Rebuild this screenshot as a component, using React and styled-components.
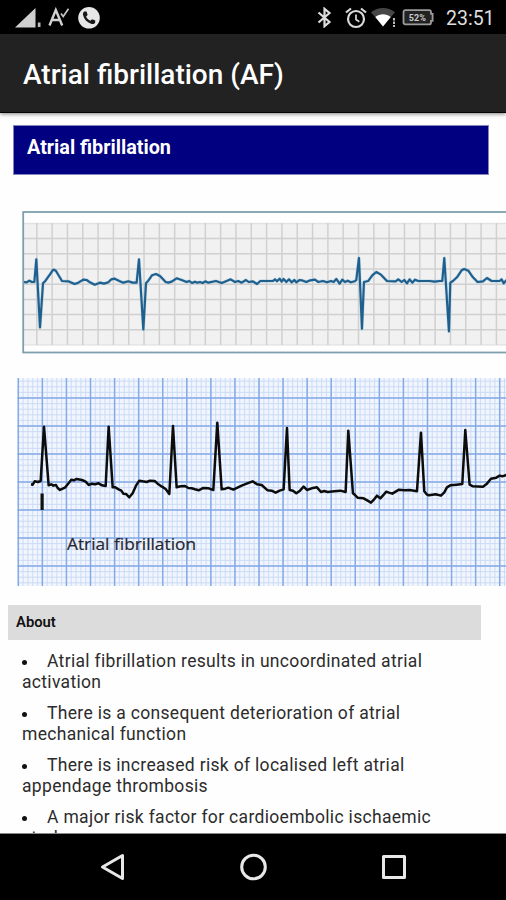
import React from "react";
import styled, { createGlobalStyle } from "styled-components";

const GlobalStyle = createGlobalStyle`
  body {
    margin: 0;
    background: #fff;
    font-family: Roboto, sans-serif;
  }
`;

const Screen = styled.div`
  display: flex;
  flex-direction: column;
  width: 506px;
  height: 900px;
  overflow: hidden;
  background: #fefefe;
`;

const StatusBar = styled.div`
  display: flex;
  justify-content: space-between;
  align-items: center;
  flex: none;
  box-sizing: border-box;
  height: 34px;
  padding: 1px 11px 0 15px;
  background: #000;
`;

const StatusGroup = styled.div`
  display: flex;
  align-items: center;
`;

const StatusIcon = styled.svg`
  display: block;
  flex: none;
  margin-left: ${(p) => p.$gap || 0}px;
`;

const Clock = styled.span`
  width: 49px;
  margin-left: 12px;
  padding-top: 2px;
  color: #dedede;
  font-size: 19.5px;
  line-height: 32px;
  white-space: nowrap;
`;

const AppBar = styled.header`
  display: flex;
  align-items: center;
  flex: none;
  position: relative;
  z-index: 1;
  box-sizing: border-box;
  height: 79px;
  padding: 3px 0 0 23px;
  background: #222;
  border-bottom: 1px solid #050505;
  box-shadow: 0 1px 4px rgba(0, 0, 0, 0.5);
`;

const Title = styled.h1`
  margin: 0;
  color: #fff;
  font-size: 28px;
  font-weight: 500;
  white-space: nowrap;
`;

const Content = styled.main`
  display: flex;
  flex-direction: column;
  flex: 1;
  min-height: 0;
  overflow: hidden;
  box-sizing: border-box;
  padding-top: 12px;
  border-bottom: 1px solid #888;
`;

const Banner = styled.h2`
  flex: none;
  box-sizing: border-box;
  width: 476px;
  height: 50px;
  margin: 0 0 0 13px;
  padding-left: 13px;
  background: #000080;
  border: 1px solid #8585bb;
  color: #fff;
  font-size: 19.8px;
  line-height: 44px;
  font-weight: 700;
`;

const Strip = styled.svg`
  display: block;
  flex: none;
  margin: ${(p) => p.$top}px 0 0 ${(p) => p.$left}px;
`;

const SectionTitle = styled.h3`
  flex: none;
  width: 465px;
  height: 35px;
  margin: 18px 0 0 8px;
  padding-left: 8px;
  background: #dcdcdc;
  color: #111;
  font-size: 14.8px;
  line-height: 35px;
  font-weight: 600;
`;

const List = styled.ul`
  list-style: none;
  margin: 11px 0 0 22px;
  padding: 0;
`;

const ListItem = styled.li`
  margin-bottom: 10px;
  color: #2c2c2c;
  font-size: 17.5px;
  line-height: 21px;
  letter-spacing: 0.32px;
  white-space: nowrap;
`;

const Bullet = styled.span`
  display: inline-block;
  width: 5px;
  height: 5px;
  margin-right: 20px;
  border-radius: 50%;
  background: #111;
  vertical-align: 2px;
`;

const NavBar = styled.nav`
  display: flex;
  align-items: center;
  justify-content: center;
  gap: 112px;
  flex: none;
  height: 66px;
  background: #000;
`;

const NavIcon = styled.svg`
  display: block;
  fill: none;
  stroke: #e8e8e8;
  stroke-width: 3;
  stroke-linejoin: round;
`;

// n evenly spaced positions
const steps = (start, gap, n) =>
  Array.from({ length: n }, (_, i) => start + i * gap);

const BLUE_TRACE =
  "72,246 80,247 88,242 96,246 103,246 109,178 120,382 129,250 136,243 150,223 158,211 162,209 168,213 186,243 205,244 215,248 224,252 235,248 250,239 260,240 270,247 284,254 300,248 312,251 325,247 334,238 344,236 358,243 370,248 385,244 398,248 410,248 417,178 430,388 438,250 445,242 456,226 468,222 480,228 497,246 505,248 515,245 530,235 545,240 560,246 568,243 576,249 585,245 592,248 600,246 608,249 616,244 625,248 648,243 665,249 680,243 692,238 705,246 715,243 725,248 738,240 746,246 759,244 771,252 781,243 819,243 825,238 831,244 839,236 845,245 851,237 859,246 867,238 875,247 883,240 889,247 899,240 909,242 919,246 931,241 945,239 955,246 969,243 981,247 993,243 1001,246 1009,237 1019,251 1027,239 1035,246 1043,242 1053,247 1064,244 1069,240 1077,174 1086,386 1092,246 1105,243 1117,226 1129,216 1143,224 1161,243 1187,244 1195,238 1205,246 1213,240 1221,250 1229,238 1237,248 1245,239 1255,243 1289,243 1304,245 1319,243 1327,243 1333,174 1347,394 1351,248 1359,243 1371,232 1385,211 1393,207 1405,212 1419,232 1433,246 1449,244 1461,234 1475,243 1499,243 1505,238 1511,250 1520,240";

const BLACK_TRACE =
  "93,343 98,344 104,334 114,336 122,333 132,170 146,346 154,343 160,347 168,345 173,354 180,360 196,352 214,329 222,331 230,327 246,330 257,335 266,345 275,341 285,343 296,340 306,346 317,348 326,170 338,352 346,352 356,358 364,362 370,371 378,372 388,382 398,370 408,347 418,332 428,334 440,336 450,332 464,333 473,341 486,350 497,357 508,372 519,168 530,352 542,349 555,348 565,354 575,355 585,358 596,361 610,354 626,355 640,360 652,158 665,358 676,356 685,353 700,359 725,347 740,341 758,334 771,343 785,345 803,361 815,362 827,368 839,362 851,358 861,174 869,360 879,362 889,370 900,362 911,350 921,360 935,355 951,352 963,366 973,363 983,366 1003,364 1021,362 1037,366 1045,182 1059,370 1066,376 1073,383 1091,385 1103,392 1113,398 1121,390 1131,377 1141,385 1152,373 1159,365 1167,368 1177,371 1197,359 1213,361 1229,360 1251,364 1263,188 1273,364 1280,373 1287,376 1307,373 1323,377 1333,367 1341,352 1351,346 1370,344 1387,342 1396,180 1409,344 1419,349 1449,350 1461,341 1473,326 1489,323 1499,317 1507,319 1520,315";

const BlueStrip = () => (
  <Strip $top={36} $left={22} width="484" height="143" viewBox="22 211 484 143">
    <rect x="24" y="223" width="490" height="122" fill="#f1f1f1" />
    <g stroke="#d0d0d0" strokeWidth="1.5">
      {steps(36.8, 15.32, 31).map((x) => (
        <line key={x} x1={x} x2={x} y1="223" y2="345" />
      ))}
      {steps(223.4, 15.2, 9).map((y) => (
        <line key={y} x1="24" x2="506" y1={y} y2={y} opacity={y < 224 || y > 340 ? 0.45 : 1} />
      ))}
    </g>
    <rect x="23.2" y="212" width="500" height="140.5" fill="none" stroke="#7f9fae" strokeWidth="1.8" />
    <g transform="translate(0 200) scale(.3333)" fill="none" strokeLinejoin="round">
      <polyline points={BLUE_TRACE} stroke="#8dbbd8" strokeWidth="10" opacity=".4" />
      <polyline points={BLUE_TRACE} stroke="#1e5f8e" strokeWidth="6.5" />
    </g>
  </Strip>
);

const BlackStrip = () => (
  <Strip $top={24} $left={17} width="489" height="209" viewBox="17 378 489 209">
    <rect x="17.5" y="378" width="489" height="208" fill="#f0f5fe" />
    <g stroke="#cbd9f4" strokeWidth=".9">
      {steps(18.3, 4.814, 102).map((x) => (
        <line key={x} x1={x} x2={x} y1="378" y2="586" />
      ))}
      {steps(381.2, 5.6, 37).map((y) => (
        <line key={y} x1="17.5" x2="506" y1={y} y2={y} />
      ))}
    </g>
    <g stroke="#84abe6" strokeWidth="1.5">
      {steps(18.3, 24.07, 21).map((x) => (
        <line key={x} x1={x} x2={x} y1="378" y2="586" />
      ))}
      {steps(398, 28, 7).map((y) => (
        <line key={y} x1="17.5" x2="506" y1={y} y2={y} />
      ))}
    </g>
    <g transform="translate(0 370) scale(.3333)">
      <polyline points={BLACK_TRACE} fill="none" stroke="#0c0c0c" strokeWidth="7.5" strokeLinejoin="round" />
    </g>
    <rect x="40.5" y="493.5" width="3.2" height="16.5" fill="#111" />
    <text
      x="67"
      y="550.3"
      fill="#26262e"
      stroke="#26262e"
      strokeWidth=".2"
      fontFamily="'Open Sans', sans-serif"
      fontSize="15.5"
      textLength="129"
      lengthAdjust="spacingAndGlyphs"
    >
      Atrial fibrillation
    </text>
  </Strip>
);

const SignalIcon = () => (
  <StatusIcon width="27" height="22" viewBox="0 0 27 22">
    <path d="M0 20.5 20.5 1v19.5z" fill="#cfcfcf" />
    <path d="M22.8 15.5h2.7v4.5h-2.7z" fill="#bbb" />
  </StatusIcon>
);

const FontCheckIcon = () => (
  <StatusIcon $gap={6} width="22" height="22" viewBox="0 0 22 22">
    <path
      d="M1.5 18.5 7.8 3 14.2 18.5M4 13h8"
      fill="none"
      stroke="#d2d2d2"
      strokeWidth="2.4"
    />
    <path d="M13 6.5l2.200 3L20.500 1.800" fill="none" stroke="#c4c4c4" strokeWidth="1.700" />
  </StatusIcon>
);

const PhoneIcon = () => (
  <StatusIcon $gap={8} width="22" height="22" viewBox="0 0 22 22">
    <circle cx="11" cy="10.8" r="10.8" fill="#e6e6e6" />
    <path
      d="M6.3 4.6 8.6 4.4 9.6 8 8.1 9.4c.9 2 2.3 3.4 4.3 4.4l1.6-1.5 3.3 1.2-.2 2.3c-.6 1.2-2 1.5-3.5 1.1C9.1 15.6 6.2 12.5 5.1 8.3 4.8 6.7 5.2 5.2 6.300 4.600z"
      fill="#161616"
    />
  </StatusIcon>
);

const BluetoothIcon = () => (
  <StatusIcon width="15" height="21" viewBox="0 0 15 21">
    <path
      d="M1.5 5.5 12.5 15 7.5 19.2V1.8L12.5 6 1.5 15.5"
      fill="none"
      stroke="#ddd"
      strokeWidth="2.2"
    />
  </StatusIcon>
);

const AlarmIcon = () => (
  <StatusIcon $gap={13} width="22" height="22" viewBox="0 0 22 22">
    <g fill="none" stroke="#dadada" strokeWidth="2.2">
      <circle cx="11" cy="12" r="8" />
      <path d="M1 5.500 6 1.500M21 5.500 16 1.500" />
      <path d="M11 7.500v5l3.300 2.200" strokeWidth="1.7" />
    </g>
  </StatusIcon>
);

const WifiIcon = () => (
  <StatusIcon $gap={4} width="26" height="21" viewBox="0 0 26 21">
    <path d="M0 5.2C7-.5 17-.5 24 5.2L12 19.5z" fill="#464646" />
    <path d="M4.300 10C9 6.200 15 6.200 19.700 10L12 19.500z" fill="#fff" />
    <path d="M22 11h2v2.500h-2zM22 14.500h2V17h-2zM22 18h2v2h-2z" fill="#bbb" />
  </StatusIcon>
);

const BatteryIcon = () => (
  <StatusIcon $gap={5} width="32" height="17" viewBox="0 0 32 17">
    <path
      d="M3.5 1.2h23.500q2 0 2 2v1.600h1.600v7h-1.600v1.600q0 2-2 2H3.500q-2 0-2-2V3.200q0-2 2-2z"
      fill="#222"
      stroke="#9c9c9c"
      strokeWidth="1.8"
    />
    <text
      x="15.3"
      y="11.7"
      textAnchor="middle"
      fill="#ccc"
      fontFamily="Roboto, sans-serif"
      fontSize="9.5"
      fontWeight="700"
      textLength="17"
      lengthAdjust="spacingAndGlyphs"
    >
      52%
    </text>
  </StatusIcon>
);

const facts = [
  ["Atrial fibrillation results in uncoordinated atrial", "activation"],
  ["There is a consequent deterioration of atrial", "mechanical function"],
  ["There is increased risk of localised left atrial", "appendage thrombosis"],
  ["A major risk factor for cardioembolic ischaemic", "stroke"],
];

const App = () => {
  return (
    <>
      <GlobalStyle />
      <Screen>
        <StatusBar>
          <StatusGroup>
            <SignalIcon />
            <FontCheckIcon />
            <PhoneIcon />
          </StatusGroup>
          <StatusGroup>
            <BluetoothIcon />
            <AlarmIcon />
            <WifiIcon />
            <BatteryIcon />
            <Clock>23:51</Clock>
          </StatusGroup>
        </StatusBar>
        <AppBar>
          <Title>Atrial fibrillation (AF)</Title>
        </AppBar>
        <Content>
          <Banner>Atrial fibrillation</Banner>
          <BlueStrip />
          <BlackStrip />
          <SectionTitle>About</SectionTitle>
          <List>
            {facts.map(([first, rest]) => (
              <ListItem key={first}>
                <Bullet />
                {first}
                <br />
                {rest}
              </ListItem>
            ))}
          </List>
        </Content>
        <NavBar>
          <NavIcon width="28" height="30" viewBox="0 0 28 30">
            <path d="M3.5 15 23.5 3.5v23z" />
          </NavIcon>
          <NavIcon width="28" height="30" viewBox="0 0 28 30">
            <circle cx="14.5" cy="15" r="11.8" />
          </NavIcon>
          <NavIcon width="28" height="30" viewBox="0 0 28 30">
            <rect x="4.5" y="4.5" width="21" height="21" />
          </NavIcon>
        </NavBar>
      </Screen>
    </>
  );
};

export default App;
